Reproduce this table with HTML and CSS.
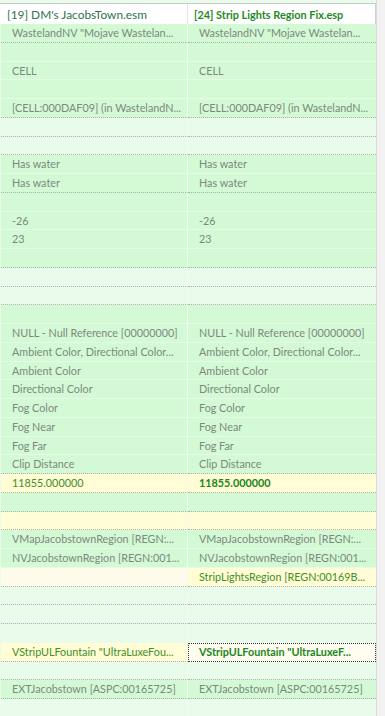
FILE: index.html
```html
<!DOCTYPE html>
<html>
<head>
<meta charset="utf-8">
<link rel="stylesheet" href="styles.css">
</head>
<body>
<div class="app">
  <div class="grid">
    <div class="head">
      <div class="hc hl">[19] DM's JacobsTown.esm</div>
      <div class="hc hr">[24] Strip Lights Region Fix.esp</div>
    </div>
    <div class="rows">
      <div class="row"><div class="c l g dot">WastelandNV "Mojave Wastelan...</div><div class="c r g dot">WastelandNV "Mojave Wastelan...</div></div>
      <div class="row"><div class="c l g sep"></div><div class="c r g sep"></div></div>
      <div class="row"><div class="c l g sep">CELL</div><div class="c r g sep">CELL</div></div>
      <div class="row"><div class="c l g sep"></div><div class="c r g sep"></div></div>
      <div class="row"><div class="c l g dot">[CELL:000DAF09] (in WastelandN...</div><div class="c r g dot">[CELL:000DAF09] (in WastelandN...</div></div>
      <div class="row"><div class="c l w dot"></div><div class="c r w dot"></div></div>
      <div class="row"><div class="c l w dot"></div><div class="c r w dot"></div></div>
      <div class="row"><div class="c l g sep">Has water</div><div class="c r g sep">Has water</div></div>
      <div class="row"><div class="c l g dot">Has water</div><div class="c r g dot">Has water</div></div>
      <div class="row"><div class="c l g sep"></div><div class="c r g sep"></div></div>
      <div class="row"><div class="c l g sep">-26</div><div class="c r g sep">-26</div></div>
      <div class="row"><div class="c l g sep">23</div><div class="c r g sep">23</div></div>
      <div class="row"><div class="c l g dot"></div><div class="c r g dot"></div></div>
      <div class="row"><div class="c l w dot"></div><div class="c r w dot"></div></div>
      <div class="row"><div class="c l w dot"></div><div class="c r w dot"></div></div>
      <div class="row"><div class="c l g sep"></div><div class="c r g sep"></div></div>
      <div class="row"><div class="c l g sep">NULL - Null Reference [00000000]</div><div class="c r g sep">NULL - Null Reference [00000000]</div></div>
      <div class="row"><div class="c l g sep">Ambient Color, Directional Color...</div><div class="c r g sep">Ambient Color, Directional Color...</div></div>
      <div class="row"><div class="c l g sep">Ambient Color</div><div class="c r g sep">Ambient Color</div></div>
      <div class="row"><div class="c l g sep">Directional Color</div><div class="c r g sep">Directional Color</div></div>
      <div class="row"><div class="c l g sep">Fog Color</div><div class="c r g sep">Fog Color</div></div>
      <div class="row"><div class="c l g sep">Fog Near</div><div class="c r g sep">Fog Near</div></div>
      <div class="row"><div class="c l g sep">Fog Far</div><div class="c r g sep">Fog Far</div></div>
      <div class="row"><div class="c l g dot">Clip Distance</div><div class="c r g dot">Clip Distance</div></div>
      <div class="row"><div class="c l y dot gn">11855.000000</div><div class="c r y dot gb">11855.000000</div></div>
      <div class="row"><div class="c l g dot"></div><div class="c r g dot"></div></div>
      <div class="row"><div class="c l y dot"></div><div class="c r y dot"></div></div>
      <div class="row"><div class="c l g sep">VMapJacobstownRegion [REGN:...</div><div class="c r g sep">VMapJacobstownRegion [REGN:...</div></div>
      <div class="row"><div class="c l g sep">NVJacobstownRegion [REGN:001...</div><div class="c r g sep">NVJacobstownRegion [REGN:001...</div></div>
      <div class="row"><div class="c l py dot"></div><div class="c r y dot gn">StripLightsRegion [REGN:00169B...</div></div>
      <div class="row"><div class="c l w dot"></div><div class="c r w dot"></div></div>
      <div class="row"><div class="c l w dot"></div><div class="c r w dot"></div></div>
      <div class="row"><div class="c l w"></div><div class="c r w"></div></div>
      <div class="row"><div class="c l y dot gn">VStripULFountain "UltraLuxeFou...</div><div class="c r y dot gb focus">VStripULFountain "UltraLuxeF...</div></div>
      <div class="row"><div class="c l w dot"></div><div class="c r w dot"></div></div>
      <div class="row"><div class="c l g dot">EXTJacobstown [ASPC:00165725]</div><div class="c r g dot">EXTJacobstown [ASPC:00165725]</div></div>
      <div class="row"><div class="c l w"></div><div class="c r w"></div></div>
    </div>
  </div>
  <div class="scroll"></div>
</div>
</body>
</html>
```
FILE: styles.css
```css
html, body {
  margin: 0;
  padding: 0;
  background: #ffffff;
  width: 385px;
  height: 716px;
  overflow: hidden;
}
.app {
  display: flex;
  height: 716px;
  font-family: Lato, "Open Sans", sans-serif;
  font-size: 10.8px;
}
.grid {
  width: 376px;
  padding-top: 3px;
  background: #e9fcec;
  display: flex;
  flex-direction: column;
}
.head {
  display: grid;
  grid-template-columns: 188px 188px;
  height: 21px;
  box-sizing: border-box;
  border-top: 1px solid #c9c9c9;
  background: #ffffff;
  flex: none;
}
.hc {
  line-height: 21px;
  white-space: nowrap;
  overflow: hidden;
}
.hl {
  padding-left: 7px;
  color: #2f7250;
  font-size: 11.9px;
  border-right: 1px solid #e4e4e4;
}
.hr {
  padding-left: 6px;
  color: #1f8a1f;
  font-weight: bold;
  font-size: 10.9px;
  border-right: 1px solid #cfcfcf;
}
.rows {
  flex: 1;
  background: #e9fcec;
  padding-left: 1px;
}
.row {
  display: grid;
  grid-template-columns: 187px 188px;
  height: 18.75px;
}
.c {
  box-sizing: border-box;
  height: 18.75px;
  line-height: 17.75px;
  border-bottom: 1px solid transparent;
  white-space: nowrap;
  overflow: hidden;
  color: #7e887e;
}
.l {
  padding-left: 11px;
  border-right: 1px solid #edfdee;
}
.r {
  padding-left: 11px;
}
.g { background: #d3fad5; }
.w { background: #e9fcec; }
.y { background: #fffcd6; }
.py { background: #fffbea; }
.sep { border-bottom-color: #e6fce8; }
.dot { border-bottom: 1px dotted #a9b3a9; }
.gn { color: #3f8f2a; }
.gb { color: #1b861b; font-weight: bold; }
.focus {
  outline: 1px dotted #3a3a3a;
  outline-offset: -1px;
  background: #fffef0;
}
.scroll {
  flex: 1;
  background: #f2f2f2;
  border-left: 1px solid #dadada;
}
```
